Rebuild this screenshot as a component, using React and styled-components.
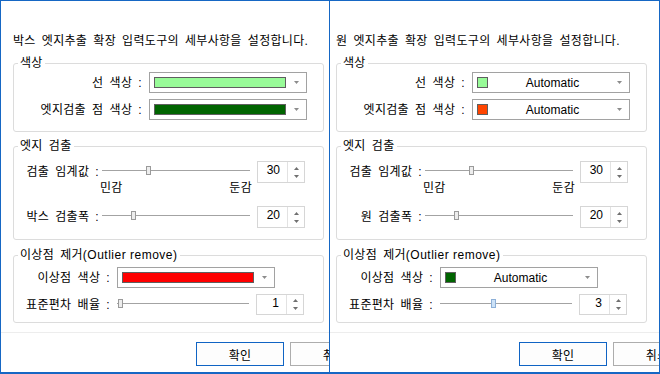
import React from 'react';
import styled, { createGlobalStyle, css } from 'styled-components';

const GlobalStyle = createGlobalStyle`
  html, body {
    margin: 0;
    padding: 0;
    background: #fff;
  }
  body {
    font-family: "Liberation Sans", "Noto Sans CJK KR", sans-serif;
    font-size: 12px;
    color: #000;
  }
`;

// 한글 텍스트 간격 (원본 맑은 고딕 폭에 맞춤)
const ko = css`
  letter-spacing: 0.3px;
  word-spacing: 2.5px;
  white-space: nowrap;
`;

const Screen = styled.div`
  display: flex;
  width: 660px;
  height: 374px;
  overflow: hidden;
  background: #fff;
`;

const Dialog = styled.div`
  box-sizing: border-box;
  flex: 0 0 ${(p) => p.$width}px;
  height: 374px;
  display: flex;
  flex-direction: column;
  overflow: hidden;
  border: 1px solid #1667c4;
  border-bottom-width: 2px;
  border-right-width: ${(p) => (p.$closed ? 1 : 0)}px;
  background: #fff;
`;

const Body = styled.div`
  padding: 32px 0 0 ${(p) => p.$pad}px;
`;

const Heading = styled.div`
  ${ko}
  line-height: 16px;
  margin-bottom: 6px;
`;

const Group = styled.fieldset`
  box-sizing: border-box;
  width: 311px;
  min-width: 0;
  margin: ${(p) => p.$top}px 0 0;
  padding: ${(p) => p.$padTop}px 0 ${(p) => p.$padBottom}px;
  border: 1px solid #dcdcdc;
  border-radius: 3px;
`;

const Legend = styled.legend`
  ${ko}
  line-height: 16px;
  margin-left: 4px;
  padding: 0 2px;
`;

const Latin = styled.span`
  letter-spacing: 0.5px;
  word-spacing: 0;
`;

const Row = styled.div`
  display: flex;
  align-items: center;
  height: ${(p) => p.$h}px;
  margin-top: ${(p) => p.$mt || 0}px;
`;

const Label = styled.span`
  ${ko}
  flex: 0 0 ${(p) => p.$w}px;
  margin-right: ${(p) => p.$gap}px;
  text-align: right;
  line-height: 16px;
`;

const Combo = styled.div`
  box-sizing: border-box;
  display: flex;
  align-items: center;
  gap: 8px;
  flex: 0 0 158px;
  height: 21px;
  padding: 0 7px 0 4px;
  border: 1px solid #a2a2a2;
  background: #fff;
`;

const Swatch = styled.span`
  box-sizing: border-box;
  flex: ${(p) => (p.$wide ? '1 1 auto' : '0 0 11px')};
  height: 11px;
  border: 1px solid #5f5f5f;
  background: ${(p) => p.$color};
`;

const ComboText = styled.span`
  flex: 1;
  text-align: center;
  line-height: 16px;
`;

const Track = styled.div`
  position: relative;
  flex: 0 0 ${(p) => p.$w}px;
  height: 100%;

  &::before {
    content: '';
    position: absolute;
    left: 0;
    right: 0;
    top: ${(p) => p.$line}px;
    height: 1px;
    background: #a3a3a3;
  }
`;

const Thumb = styled.span`
  position: absolute;
  top: ${(p) => p.$line - 4}px;
  box-sizing: border-box;
  width: 5px;
  height: 9px;
  margin-left: -2px;
  border: 1px solid ${(p) => (p.$active ? '#8db0d8' : '#9a9a9a')};
  background: ${(p) => (p.$active ? '#cde2f7' : '#ededed')};
`;

const TickRow = styled.div`
  ${ko}
  display: flex;
  justify-content: space-between;
  width: 152px;
  margin: -3px 0 0 ${(p) => p.$left}px;
  line-height: 16px;
`;

const Spin = styled.div`
  box-sizing: border-box;
  display: flex;
  flex: 0 0 48px;
  height: ${(p) => p.$h}px;
  margin-left: 7px;
  border: 1px solid #d6d6d6;
`;

const SpinValue = styled.div`
  flex: 1;
  text-align: right;
  padding-right: 7px;
  line-height: 17px;
`;

const SpinButtons = styled.div`
  flex: 0 0 16px;
  display: flex;
  flex-direction: column;
  align-items: center;
  justify-content: center;
  gap: 5px;
  border-left: 1px solid #e2e2e2;
`;

const Footer = styled.div`
  box-sizing: border-box;
  flex-shrink: 0;
  display: flex;
  gap: 6px;
  height: 40px;
  margin-top: auto;
  padding: 9px 0 0 ${(p) => p.$pad + 183}px;
  border-top: 1px solid #ededed;
`;

const Button = styled.button`
  ${ko}
  box-sizing: border-box;
  flex: 0 0 88px;
  height: 24px;
  padding: 0;
  border: 1px solid ${(p) => (p.$primary ? '#1064c4' : '#adadad')};
  background: #fdfdfd;
  font-family: inherit;
  font-size: 12px;
  color: #000;
`;

const Arrow = ({ up, color = '#707070' }) => (
  <svg width="5" height="3" viewBox="0 0 5 3" style={{ display: 'block' }}>
    <path d={up ? 'M0 3h5L2.5 0z' : 'M0 0h5L2.5 3z'} fill={color} />
  </svg>
);

const ColorCombo = ({ color, auto }) => (
  <Combo>
    <Swatch $color={color} $wide={!auto} />
    {auto && <ComboText>Automatic</ComboText>}
    <Arrow color="#8c8c8c" />
  </Combo>
);

const Slider = ({ w, line, frac, active }) => (
  <Track $w={w} $line={line}>
    <Thumb
      $line={line}
      $active={active}
      style={{ left: `calc(3px + ${frac} * (100% - 6px))` }}
    />
  </Track>
);

const SpinBox = ({ value, h }) => (
  <Spin $h={h}>
    <SpinValue>{value}</SpinValue>
    <SpinButtons>
      <Arrow up />
      <Arrow />
    </SpinButtons>
  </Spin>
);

const EdgeDialog = ({ d }) => (
  <Dialog $width={d.width} $closed={d.closed}>
    <Body $pad={d.pad}>
      <Heading>{d.title}</Heading>

      <Group $top={0} $padTop={1} $padBottom={11}>
        <Legend>색상</Legend>
        <Row $h={21}>
          <Label $w={128} $gap={7}>선 색상 :</Label>
          <ColorCombo color={d.lineColor} auto={d.auto} />
        </Row>
        <Row $h={21} $mt={6}>
          <Label $w={128} $gap={7}>엣지검출 점 색상 :</Label>
          <ColorCombo color={d.pointColor} auto={d.auto} />
        </Row>
      </Group>

      <Group $top={6} $padTop={7} $padBottom={11}>
        <Legend>엣지 검출</Legend>
        <Row $h={22}>
          <Label $w={85} $gap={3}>검출 임계값 :</Label>
          <Slider w={148} line={9} frac={0.3} />
          <SpinBox value={30} h={22} />
        </Row>
        <TickRow $left={86}>
          <span>민감</span>
          <span>둔감</span>
        </TickRow>
        <Row $h={22} $mt={10}>
          <Label $w={85} $gap={3}>{d.widthLabel}</Label>
          <Slider w={148} line={9} frac={0.2} />
          <SpinBox value={20} h={22} />
        </Row>
      </Group>

      <Group $top={7} $padTop={4} $padBottom={7}>
        <Legend>
          이상점 제거<Latin>(Outlier remove)</Latin>
        </Legend>
        <Row $h={21}>
          <Label $w={96} $gap={7}>이상점 색상 :</Label>
          <ColorCombo color={d.outlierColor} auto={d.auto} />
        </Row>
        <Row $h={21} $mt={6}>
          <Label $w={96} $gap={7}>표준편차 배율 :</Label>
          <Slider w={132} line={9} frac={d.stdFrac} active={d.stdActive} />
          <SpinBox value={d.std} h={21} />
        </Row>
      </Group>
    </Body>

    <Footer $pad={d.pad}>
      <Button $primary>확인</Button>
      <Button>취소</Button>
    </Footer>
  </Dialog>
);

const dialogs = [
  {
    width: 329,
    pad: 12,
    closed: false,
    title: '박스 엣지추출 확장 입력도구의 세부사항을 설정합니다.',
    widthLabel: '박스 검출폭 :',
    auto: false,
    lineColor: '#98fb98',
    pointColor: '#006400',
    outlierColor: '#ff0000',
    std: 1,
    stdFrac: 0,
    stdActive: false,
  },
  {
    width: 331,
    pad: 6,
    closed: true,
    title: '원 엣지추출 확장 입력도구의 세부사항을 설정합니다.',
    widthLabel: '원 검출폭 :',
    auto: true,
    lineColor: '#98fb98',
    pointColor: '#ff4500',
    outlierColor: '#006400',
    std: 3,
    stdFrac: 0.4,
    stdActive: true,
  },
];

const App = () => (
  <>
    <GlobalStyle />
    <Screen>
      {dialogs.map((d) => (
        <EdgeDialog key={d.title} d={d} />
      ))}
    </Screen>
  </>
);

export default App;
